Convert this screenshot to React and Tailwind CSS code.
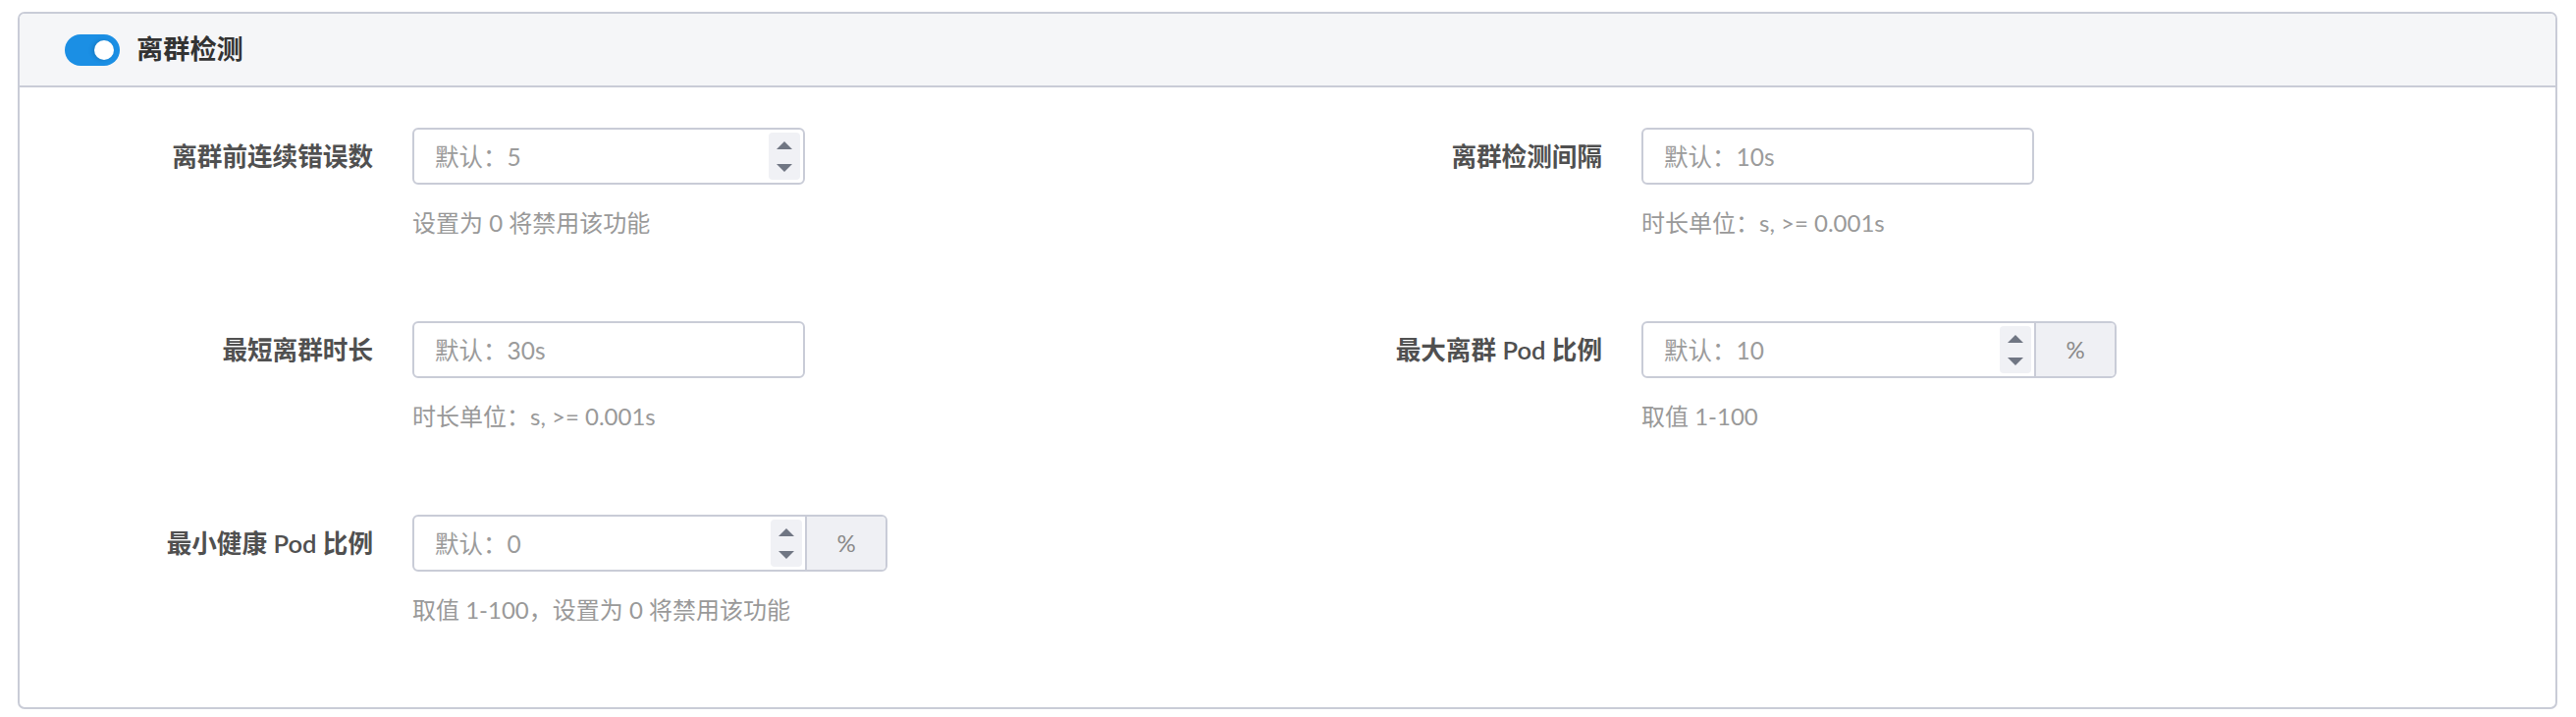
import { useState } from 'react'

const FONT = "font-['Lato','Noto_Sans_CJK_SC',sans-serif]"

function Spinner() {
  return (
    <div className="absolute top-[3px] right-[3px] bottom-[3px] flex w-[32px] flex-col items-center justify-center gap-[15px] rounded-[4px] bg-[#f0f1f5]">
      <svg width="16" height="8" viewBox="0 0 16 8" aria-hidden="true"><polygon points="8,0 16,8 0,8" fill="#707683" /></svg>
      <svg width="16" height="8" viewBox="0 0 16 8" aria-hidden="true"><polygon points="0,0 16,0 8,8" fill="#707683" /></svg>
    </div>
  )
}

function NumberBox({ placeholder, stepper, unit }) {
  const input = (
    <div className="relative h-full flex-1">
      <input type="text" placeholder={placeholder} className="h-full w-full bg-transparent pl-[21px] pr-[44px] text-[24.5px] text-[#333] outline-none placeholder:text-[#9b9b9b]" />
      {stepper && <Spinner />}
    </div>
  )
  return (
    <div className={`flex h-[58px] overflow-hidden rounded-[6px] border-2 border-[#c9ccd7] bg-white ${unit ? 'w-[484px]' : 'w-[400px]'}`}>
      {input}
      {unit && <div className="flex w-[82px] items-center justify-center border-l-2 border-[#c9ccd7] bg-[#eff0f4] text-[24px] text-[#8a8a8a]">{unit}</div>}
    </div>
  )
}

function Field({ label, help, ...box }) {
  return (
    <div className="flex items-start gap-[40px]">
      <div className="flex h-[58px] w-[360px] shrink-0 items-center justify-end text-[25.6px] font-semibold text-[#505050]">{label}</div>
      <div>
        <NumberBox {...box} />
        <p className="mt-[22px] text-[24px] leading-[33px] text-[#999]">{help}</p>
      </div>
    </div>
  )
}

export default function App() {
  const [enabled, setEnabled] = useState(true)
  return (
    <div className={`min-h-screen bg-white pt-[12px] pr-[19px] pb-[12px] pl-[18px] ${FONT}`}>
      <section className="overflow-hidden rounded-[7px] border-2 border-[#c9ccd7]">
        <header className="flex h-[75px] items-center gap-[17px] border-b-2 border-[#c9ccd7] bg-[#f5f6f8] pl-[46px]">
          <button type="button" onClick={() => setEnabled(v => !v)} className={`relative h-[32px] w-[56px] rounded-full ${enabled ? 'bg-[#1b8fe4]' : 'bg-[#c9ccd7]'}`}>
            <span className={`absolute top-[6px] h-[20px] w-[20px] rounded-full bg-white shadow-[-2px_0_4px_rgba(0,0,0,0.15)] ${enabled ? 'right-[6px]' : 'left-[6px]'}`} />
          </button>
          <h2 className="text-[27.2px] font-bold text-[#333]">离群检测</h2>
        </header>
        <div className="grid grid-cols-[1252px_1fr] gap-y-[84px] pt-[41px] pb-[83px]">
          <Field label="离群前连续错误数" placeholder="默认：5" stepper help="设置为 0 将禁用该功能" />
          <Field label="离群检测间隔" placeholder="默认：10s" help="时长单位：s, >= 0.001s" />
          <Field label="最短离群时长" placeholder="默认：30s" help="时长单位：s, >= 0.001s" />
          <Field label="最大离群 Pod 比例" placeholder="默认：10" stepper unit="%" help="取值 1-100" />
          <Field label="最小健康 Pod 比例" placeholder="默认：0" stepper unit="%" help="取值 1-100，设置为 0 将禁用该功能" />
        </div>
      </section>
    </div>
  )
}
